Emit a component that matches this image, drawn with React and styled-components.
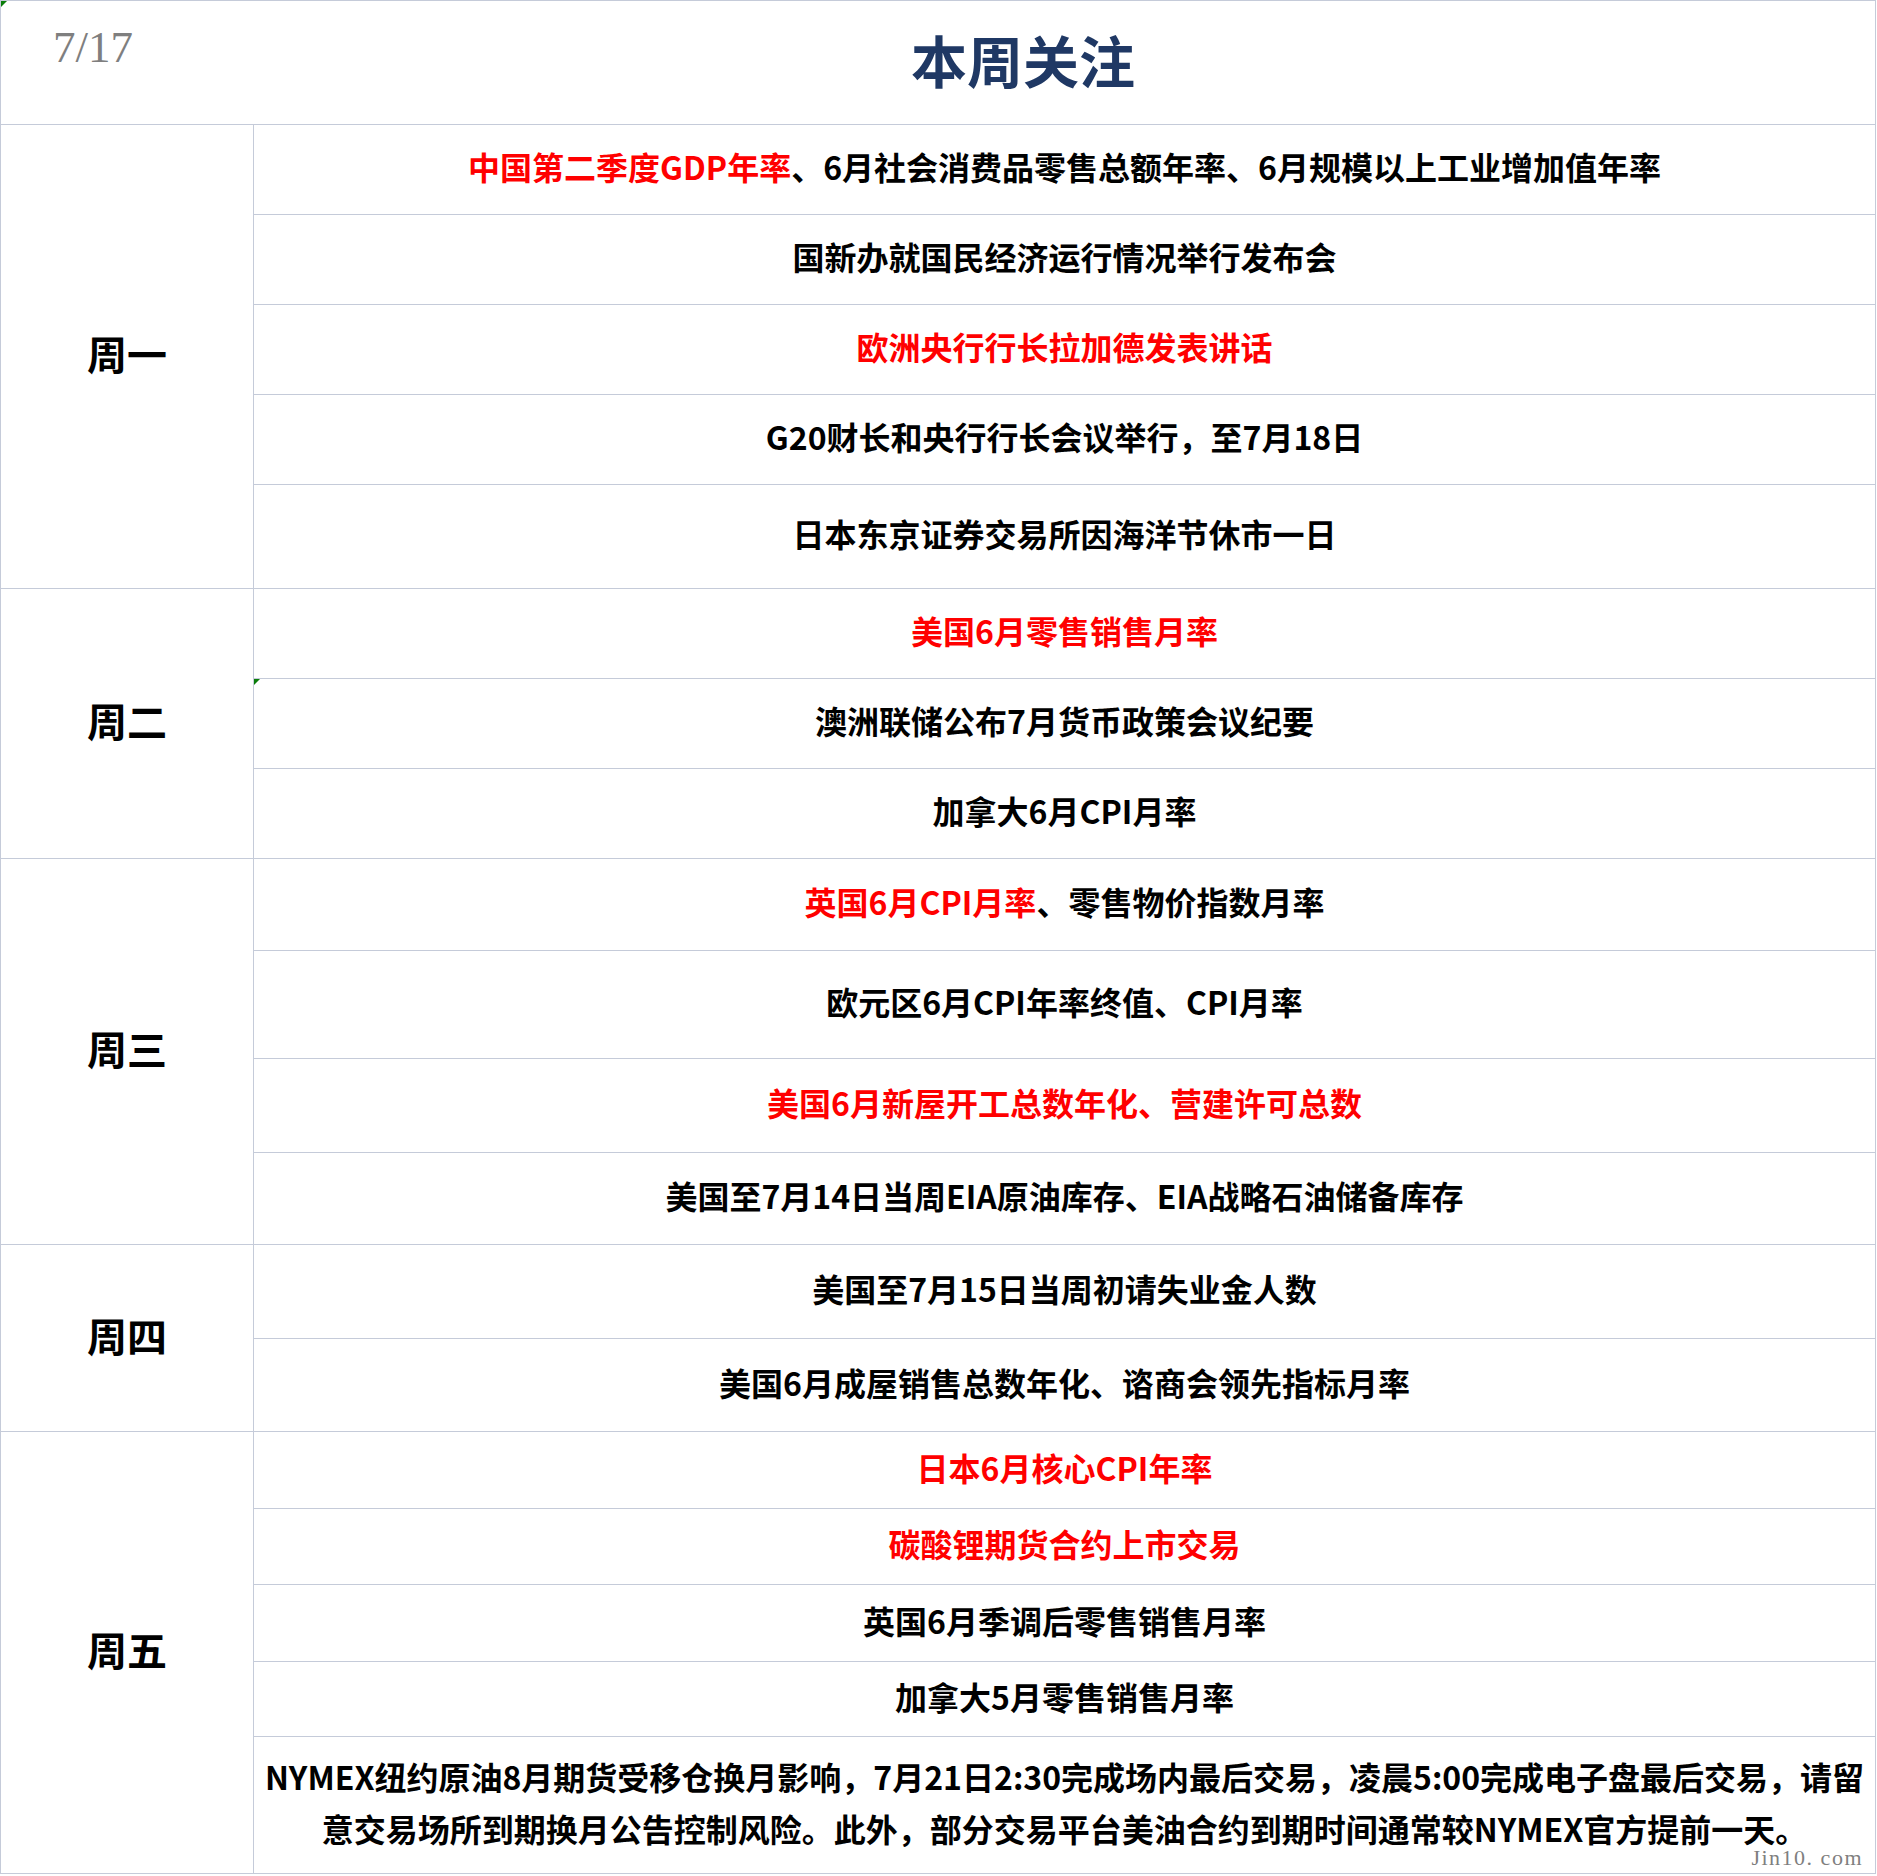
import React from "react";
import styled, { createGlobalStyle, css } from "styled-components";

const GlobalStyle = createGlobalStyle`
  html, body { margin: 0; padding: 0; background: #ffffff; }
  body { font-family: "Noto Sans CJK SC", "Noto Sans", sans-serif; }
  * { box-sizing: border-box; }
`;

const LINE = "#c5cbd9";

const flagCss = css`
  &::before {
    content: "";
    position: absolute;
    left: 0;
    top: 0;
    width: 0;
    height: 0;
    border-top: 6px solid #0a7d0a;
    border-right: 6px solid transparent;
  }
`;

const Sheet = styled.div`
  position: relative;
  width: 1876px;
  border-left: 1px solid ${LINE};
  border-right: 1px solid ${LINE};
  border-bottom: 1px solid ${LINE};
  background: #fff;
`;

const Header = styled.header`
  position: relative;
  display: flex;
  height: 124px;
  border-top: 1px solid ${LINE};
  ${flagCss}
`;

const DateLabel = styled.div`
  width: 170px;
  padding: 24px 0 0 52px;
  font-family: "Liberation Serif", "DejaVu Serif", serif;
  font-size: 45px;
  line-height: 1;
  color: #7f7f7f;
`;

const Title = styled.h1`
  flex: 1;
  margin: 0;
  display: flex;
  align-items: center;
  justify-content: center;
  padding-bottom: 9px;
  font-size: 56px;
  font-weight: 700;
  color: #1f3864;
  letter-spacing: 0;
`;

const Group = styled.section`
  display: flex;
  align-items: stretch;
`;

const DayLabel = styled.div`
  width: 253px;
  flex: none;
  display: flex;
  align-items: center;
  justify-content: center;
  padding-bottom: 7px;
  border-top: 1px solid ${LINE};
  border-right: 1px solid ${LINE};
  font-size: 40px;
  font-weight: 700;
  color: #000;
`;

const Items = styled.div`
  flex: 1;
  display: flex;
  flex-direction: column;
`;

const Item = styled.div`
  position: relative;
  height: ${(p) => p.$h}px;
  display: flex;
  align-items: center;
  justify-content: center;
  padding: 0 8px 5px;
  border-top: 1px solid ${LINE};
  font-size: 32px;
  font-weight: 700;
  line-height: 1.6;
  text-align: center;
  color: #000;
  ${(p) => p.$flag && flagCss}
`;

const Seg = styled.span`
  color: ${(p) => (p.$red ? "#ff0000" : "#000000")};
`;

const Watermark = styled.div`
  position: absolute;
  right: 12px;
  bottom: 4px;
  font-family: "Liberation Serif", "DejaVu Serif", serif;
  font-size: 22px;
  letter-spacing: 1.5px;
  line-height: 1;
  color: #7f7f7f;
`;

const data = [
  {
    day: "周一",
    items: [
      { h: 90, segs: [["中国第二季度GDP年率", true], ["、6月社会消费品零售总额年率、6月规模以上工业增加值年率", false]] },
      { h: 90, segs: [["国新办就国民经济运行情况举行发布会", false]] },
      { h: 90, segs: [["欧洲央行行长拉加德发表讲话", true]] },
      { h: 90, segs: [["G20财长和央行行长会议举行，至7月18日", false]] },
      { h: 104, segs: [["日本东京证券交易所因海洋节休市一日", false]] },
    ],
  },
  {
    day: "周二",
    items: [
      { h: 90, segs: [["美国6月零售销售月率", true]] },
      { h: 90, flag: true, segs: [["澳洲联储公布7月货币政策会议纪要", false]] },
      { h: 90, segs: [["加拿大6月CPI月率", false]] },
    ],
  },
  {
    day: "周三",
    items: [
      { h: 92, segs: [["英国6月CPI月率", true], ["、零售物价指数月率", false]] },
      { h: 108, segs: [["欧元区6月CPI年率终值、CPI月率", false]] },
      { h: 94, segs: [["美国6月新屋开工总数年化、营建许可总数", true]] },
      { h: 92, segs: [["美国至7月14日当周EIA原油库存、EIA战略石油储备库存", false]] },
    ],
  },
  {
    day: "周四",
    items: [
      { h: 94, segs: [["美国至7月15日当周初请失业金人数", false]] },
      { h: 93, segs: [["美国6月成屋销售总数年化、谘商会领先指标月率", false]] },
    ],
  },
  {
    day: "周五",
    items: [
      { h: 77, segs: [["日本6月核心CPI年率", true]] },
      { h: 76, segs: [["碳酸锂期货合约上市交易", true]] },
      { h: 77, segs: [["英国6月季调后零售销售月率", false]] },
      { h: 75, segs: [["加拿大5月零售销售月率", false]] },
      {
        h: 137,
        lines: [
          "NYMEX纽约原油8月期货受移仓换月影响，7月21日2:30完成场内最后交易，凌晨5:00完成电子盘最后交易，请留",
          "意交易场所到期换月公告控制风险。此外，部分交易平台美油合约到期时间通常较NYMEX官方提前一天。",
        ],
      },
    ],
  },
];

export default function App() {
  return (
    <>
      <GlobalStyle />
      <Sheet>
        <Header>
          <DateLabel>7/17</DateLabel>
          <Title>本周关注</Title>
        </Header>
        {data.map((g) => (
          <Group key={g.day}>
            <DayLabel>{g.day}</DayLabel>
            <Items>
              {g.items.map((it, i) => (
                <Item key={i} $h={it.h} $flag={it.flag}>
                  {it.lines ? (
                    <span>
                      {it.lines[0]}
                      <br />
                      {it.lines[1]}
                    </span>
                  ) : (
                    <span>
                      {it.segs.map(([t, red], j) => (
                        <Seg key={j} $red={red}>
                          {t}
                        </Seg>
                      ))}
                    </span>
                  )}
                </Item>
              ))}
            </Items>
          </Group>
        ))}
        <Watermark>Jin10. com</Watermark>
      </Sheet>
    </>
  );
}
